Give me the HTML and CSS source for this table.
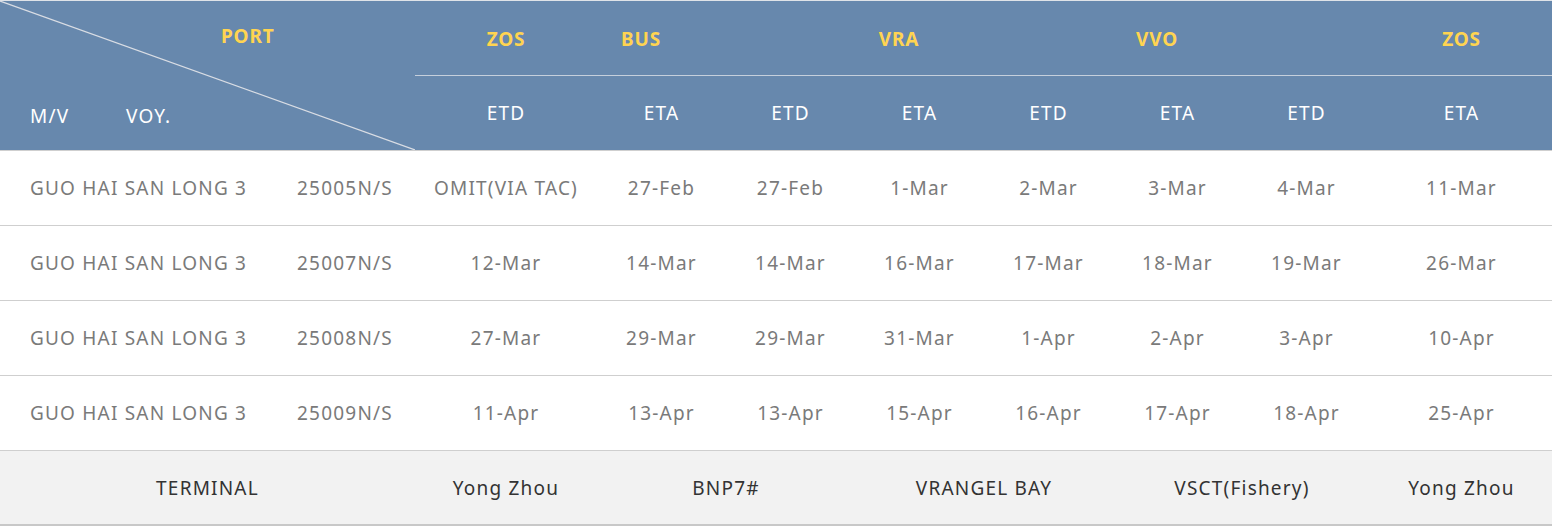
FILE: index.html
```html
<!DOCTYPE html>
<html>
<head>
<meta charset="utf-8">
<link rel="stylesheet" href="styles.css">
</head>
<body>
<div class="schedule">
  <div class="head">
    <div class="corner">
      <svg class="diag" width="415" height="149" viewBox="0 0 415 149"><line x1="0" y1="0" x2="415" y2="149" stroke="#d9dde4" stroke-width="1.2"/></svg>
      <div class="corner-top"><span class="port">PORT</span></div>
      <div class="corner-bottom"><span class="mv">M/V</span><span class="voy">VOY.</span></div>
    </div>
    <div class="hc top c3"><span class="pname">ZOS</span></div>
    <div class="hc top span2 shift"><span class="pname">BUS</span></div>
    <div class="hc top span2 shift"><span class="pname">VRA</span></div>
    <div class="hc top span2 shift"><span class="pname">VVO</span></div>
    <div class="hc top"><span class="pname">ZOS</span></div>
    <div class="hc sub">ETD</div>
    <div class="hc sub">ETA</div>
    <div class="hc sub">ETD</div>
    <div class="hc sub">ETA</div>
    <div class="hc sub">ETD</div>
    <div class="hc sub">ETA</div>
    <div class="hc sub">ETD</div>
    <div class="hc sub">ETA</div>
  </div>

  <div class="row">
    <div class="cell vessel">GUO HAI SAN LONG 3</div>
    <div class="cell">25005N/S</div>
    <div class="cell">OMIT(VIA TAC)</div>
    <div class="cell">27-Feb</div>
    <div class="cell">27-Feb</div>
    <div class="cell">1-Mar</div>
    <div class="cell">2-Mar</div>
    <div class="cell">3-Mar</div>
    <div class="cell">4-Mar</div>
    <div class="cell">11-Mar</div>
  </div>
  <div class="row">
    <div class="cell vessel">GUO HAI SAN LONG 3</div>
    <div class="cell">25007N/S</div>
    <div class="cell">12-Mar</div>
    <div class="cell">14-Mar</div>
    <div class="cell">14-Mar</div>
    <div class="cell">16-Mar</div>
    <div class="cell">17-Mar</div>
    <div class="cell">18-Mar</div>
    <div class="cell">19-Mar</div>
    <div class="cell">26-Mar</div>
  </div>
  <div class="row">
    <div class="cell vessel">GUO HAI SAN LONG 3</div>
    <div class="cell">25008N/S</div>
    <div class="cell">27-Mar</div>
    <div class="cell">29-Mar</div>
    <div class="cell">29-Mar</div>
    <div class="cell">31-Mar</div>
    <div class="cell">1-Apr</div>
    <div class="cell">2-Apr</div>
    <div class="cell">3-Apr</div>
    <div class="cell">10-Apr</div>
  </div>
  <div class="row">
    <div class="cell vessel">GUO HAI SAN LONG 3</div>
    <div class="cell">25009N/S</div>
    <div class="cell">11-Apr</div>
    <div class="cell">13-Apr</div>
    <div class="cell">13-Apr</div>
    <div class="cell">15-Apr</div>
    <div class="cell">16-Apr</div>
    <div class="cell">17-Apr</div>
    <div class="cell">18-Apr</div>
    <div class="cell">25-Apr</div>
  </div>
  <div class="row terminal">
    <div class="cell span2">TERMINAL</div>
    <div class="cell">Yong Zhou</div>
    <div class="cell span2">BNP7#</div>
    <div class="cell span2">VRANGEL BAY</div>
    <div class="cell span2">VSCT(Fishery)</div>
    <div class="cell">Yong Zhou</div>
  </div>
</div>
</body>
</html>
```

FILE: styles.css
```css
html, body {
  margin: 0;
  padding: 0;
  background: #ffffff;
}

body {
  font-family: "Noto Sans", "Open Sans", "Liberation Sans", sans-serif;
  font-size: 19px;
  letter-spacing: 1.2px;
}

.schedule {
  width: 1552px;
  border-top: 1px solid #dfe3e8;
}

.head,
.row {
  display: grid;
  grid-template-columns: 275px 140px 182px repeat(6, 129px) 181px;
}

.head {
  background: #6788ad;
  grid-template-rows: 75px 74px;
  border-bottom: 1px solid #cfcfcf;
}

.corner {
  grid-column: 1 / span 2;
  grid-row: 1 / span 2;
  position: relative;
  display: flex;
  flex-direction: column;
  justify-content: space-between;
}

.diag {
  position: absolute;
  left: 0;
  top: 0;
}

.corner-top {
  height: 70px;
  display: flex;
  align-items: center;
  padding-left: 221px;
}

.corner-bottom {
  height: 79px;
  box-sizing: border-box;
  padding-top: 10px;
  display: flex;
  align-items: center;
  padding-left: 30px;
  color: #ffffff;
}

.mv {
  width: 96px;
}

.port,
.pname {
  color: #ffd451;
  font-weight: 700;
  letter-spacing: 0.8px;
}

.hc {
  display: flex;
  align-items: center;
  justify-content: center;
  color: #ffffff;
}

.hc.top {
  border-bottom: 1px solid #c5cfdc;
  box-sizing: border-box;
  padding-top: 1px;
}

.hc.c3 {
  grid-column: 3;
}

.span2 {
  grid-column: span 2;
}

.hc.shift {
  justify-content: flex-start;
}

.hc.shift .pname {
  width: 88px;
  text-align: center;
}

.row {
  height: 74px;
  border-bottom: 1px solid #cfcfcf;
  color: #7a7a7a;
}

.cell {
  display: flex;
  align-items: center;
  justify-content: center;
  white-space: nowrap;
}

.cell.vessel {
  justify-content: flex-start;
  padding-left: 30px;
}

.row.terminal {
  background: #f2f2f2;
  color: #333333;
  height: 73px;
  border-bottom: 2px solid #c8c8c8;
}
```
